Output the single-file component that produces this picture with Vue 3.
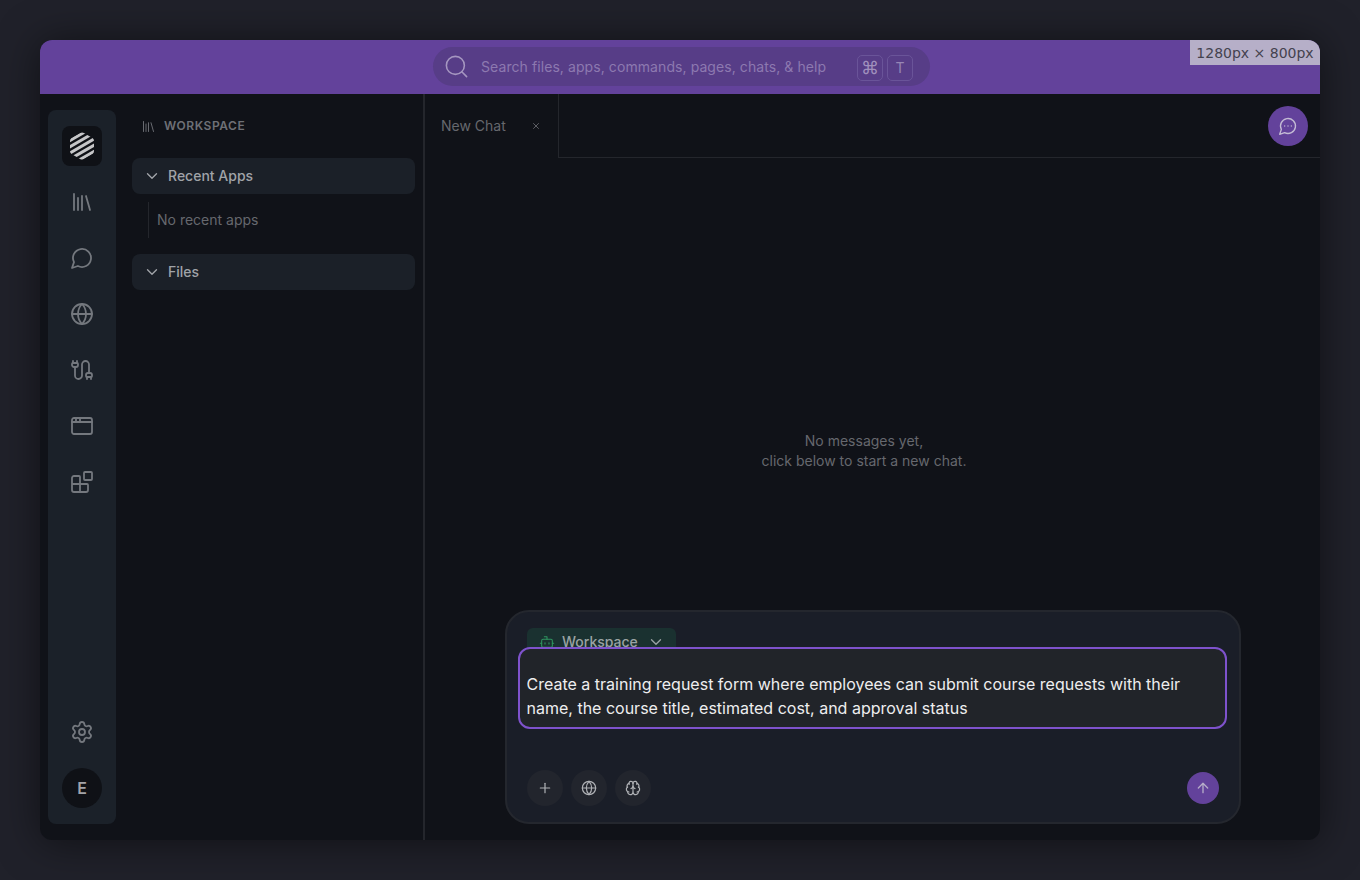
<template>
  <div class="page">
    <div class="frame">
      <header class="topbar">
        <div class="search">
          <svg class="search-icon" viewBox="0 0 24 24"><circle cx="11" cy="11" r="8" /><path d="m21 21-4.3-4.3" /></svg>
          <span class="search-text">Search files, apps, commands, pages, chats, &amp; help</span>
          <span class="key cmd">⌘</span>
          <span class="key">T</span>
        </div>
        <div class="size-tag">1280px × 800px</div>
      </header>
      <div class="body">
        <nav class="rail">
          <div class="logo">
            <svg viewBox="0 0 24 28" class="logo-svg">
              <defs>
                <clipPath id="hex"><path d="M10 1Q12 0 14 1L22.5 6Q24 7 24 9V19Q24 21 22.5 22L14 27Q12 28 10 27L1.5 22Q0 21 0 19V9Q0 7 1.5 6Z" /></clipPath>
              </defs>
              <g clip-path="url(#hex)" class="stripes">
                <path v-for="c in stripes" :key="c" :d="`M-2 ${c + 1.15}L26 ${c - 15}`" />
              </g>
            </svg>
          </div>
          <button v-for="n in navIcons" :key="n.id" class="rail-btn">
            <svg viewBox="0 0 24 24" class="ic"><path v-for="d in n.paths" :key="d" :d="d" /></svg>
          </button>
          <div class="spacer"></div>
          <button class="rail-btn">
            <svg viewBox="0 0 24 24" class="ic"><path d="M9.671 4.136a2.34 2.34 0 0 1 4.659 0 2.34 2.34 0 0 0 3.319 1.915 2.34 2.34 0 0 1 2.33 4.033 2.34 2.34 0 0 0 0 3.831 2.34 2.34 0 0 1-2.33 4.033 2.34 2.34 0 0 0-3.319 1.915 2.34 2.34 0 0 1-4.659 0 2.34 2.34 0 0 0-3.32-1.915 2.34 2.34 0 0 1-2.33-4.033 2.34 2.34 0 0 0 0-3.831A2.34 2.34 0 0 1 6.35 6.051a2.34 2.34 0 0 0 3.319-1.915" /><circle cx="12" cy="12" r="3" /></svg>
          </button>
          <div class="avatar">E</div>
        </nav>
        <aside class="side">
          <div class="side-head">
            <svg viewBox="0 0 24 24" class="side-ic"><path d="m16 6 4 14" /><path d="M12 6v14" /><path d="M8 8v12" /><path d="M4 4v16" /></svg>
            <span>WORKSPACE</span>
          </div>
          <div class="sec">
            <svg viewBox="0 0 24 24" class="chev"><path d="m6 9 6 6 6-6" /></svg>
            <span>Recent Apps</span>
          </div>
          <div class="empty"><span>No recent apps</span></div>
          <div class="sec">
            <svg viewBox="0 0 24 24" class="chev"><path d="m6 9 6 6 6-6" /></svg>
            <span>Files</span>
          </div>
        </aside>
        <main class="main">
          <div class="tabs">
            <div class="tab">
              <span>New Chat</span>
              <svg viewBox="0 0 24 24" class="close"><path d="M18 6 6 18" /><path d="m6 6 12 12" /></svg>
            </div>
            <div class="tab-rest">
              <button class="chat-btn">
                <svg viewBox="0 0 24 24"><path d="M7.9 20A9 9 0 1 0 4 16.1L2 22Z" /><path d="M8 12h.01" /><path d="M12 12h.01" /><path d="M16 12h.01" /></svg>
              </button>
            </div>
          </div>
          <div class="content">
            <div class="placeholder">No messages yet,<br />click below to start a new chat.</div>
            <div class="composer">
              <div class="chip">
                <svg viewBox="0 0 24 24" class="bot"><path d="M12 8V4H8" /><rect width="16" height="12" x="4" y="8" rx="2" /><path d="M2 14h2" /><path d="M20 14h2" /><path d="M15 13v2" /><path d="M9 13v2" /></svg>
                <span>Workspace</span>
                <svg viewBox="0 0 24 24" class="chip-chev"><path d="m6 9 6 6 6-6" /></svg>
              </div>
              <div class="input">Create a training request form where employees can submit course requests with their name, the course title, estimated cost, and approval status</div>
              <div class="tools">
                <button class="tool"><svg viewBox="0 0 24 24"><path d="M5 12h14" /><path d="M12 5v14" /></svg></button>
                <button class="tool"><svg viewBox="0 0 24 24"><circle cx="12" cy="12" r="10" /><path d="M12 2a14.5 14.5 0 0 0 0 20 14.5 14.5 0 0 0 0-20" /><path d="M2 12h20" /></svg></button>
                <button class="tool"><svg viewBox="0 0 24 24"><path d="M12 18V5" /><path d="M15 13a4.17 4.17 0 0 1-3-4 4.17 4.17 0 0 1-3 4" /><path d="M17.598 6.5A3 3 0 1 0 12 5a3 3 0 1 0-5.598 1.5" /><path d="M17.997 5.125a4 4 0 0 1 2.526 5.77" /><path d="M18 18a4 4 0 0 0 2-7.464" /><path d="M19.967 17.483A4 4 0 1 1 12 18a4 4 0 1 1-7.967-.517" /><path d="M6 18a4 4 0 0 1-2-7.464" /><path d="M6.003 5.125a4 4 0 0 0-2.526 5.77" /></svg></button>
                <button class="send"><svg viewBox="0 0 24 24"><path d="m5 12 7-7 7 7" /><path d="M12 19V5" /></svg></button>
              </div>
            </div>
          </div>
        </main>
      </div>
    </div>
  </div>
</template>

<script setup>
const stripes = [2.3, 8.5, 14.7, 20.9, 27.1, 33.3, 39.5]
const navIcons = [
  { id: 'library', paths: ['m16 6 4 14', 'M12 6v14', 'M8 8v12', 'M4 4v16'] },
  { id: 'chat', paths: ['M7.9 20A9 9 0 1 0 4 16.1L2 22Z'] },
  { id: 'globe', paths: ['M12 2a10 10 0 1 0 0 20 10 10 0 0 0 0-20Z', 'M12 2a14.5 14.5 0 0 0 0 20 14.5 14.5 0 0 0 0-20', 'M2 12h20'] },
  { id: 'cable', paths: ['M17 21v-2a1 1 0 0 1-1-1v-1a2 2 0 0 1 2-2h2a2 2 0 0 1 2 2v1a1 1 0 0 1-1 1', 'M19 15V6.5a1 1 0 0 0-7 0v11a1 1 0 0 1-7 0V9', 'M21 21v-2h-4', 'M3 5h4V3', 'M7 5a1 1 0 0 1 1 1v1a2 2 0 0 1-2 2H4a2 2 0 0 1-2-2V6a1 1 0 0 1 1-1V3'] },
  { id: 'window', paths: ['M4 4h16a2 2 0 0 1 2 2v12a2 2 0 0 1-2 2H4a2 2 0 0 1-2-2V6a2 2 0 0 1 2-2Z', 'M10 4v4', 'M2 8h20', 'M6 4v4'] },
  { id: 'blocks', paths: ['M10 22V7a1 1 0 0 0-1-1H4a2 2 0 0 0-2 2v12a2 2 0 0 0 2 2h12a2 2 0 0 0 2-2v-5a1 1 0 0 0-1-1H2', 'M15 2h6a1 1 0 0 1 1 1v6a1 1 0 0 1-1 1h-6a1 1 0 0 1-1-1V3a1 1 0 0 1 1-1Z'] },
]
</script>

<style>
html, body { margin: 0; background: #20212a; }
</style>

<style scoped>
* { box-sizing: border-box; }
svg { fill: none; stroke: currentColor; stroke-width: 2; stroke-linecap: round; stroke-linejoin: round; display: block; }
button { border: 0; padding: 0; background: none; }
.page {
  width: 1360px; height: 880px; padding: 40px; background: #20212a;
  font-family: Inter, "Liberation Sans", sans-serif; overflow: hidden;
}
.frame {
  width: 1280px; height: 800px; display: flex; flex-direction: column; background: #101218;
  border-radius: 12px; overflow: hidden; box-shadow: 0 2px 40px rgba(0, 0, 0, .5);
}
.topbar {
  height: 54px; flex: none; background: #63429b; display: flex; align-items: center; justify-content: center;
  position: relative; padding-left: 3px; padding-bottom: 1px;
}
.search {
  width: 497px; height: 39px; border-radius: 20px; background: #573d87; display: flex; align-items: center;
  padding: 0 17px 0 10px; color: #8d79b0; font-size: 14px;
}
.search-icon { width: 27px; height: 27px; stroke-width: 1.4; flex: none; color: #a596c0; }
.search-text { margin-left: 11px; flex: 1; white-space: nowrap; letter-spacing: .08px; padding-bottom: 1px; }
.key {
  width: 26px; height: 26px; border: 1px solid #6a5499; border-radius: 5px; display: flex; align-items: center;
  justify-content: center; font-size: 14px; color: #9686b5; margin-left: 4px; position: relative; top: 1px;
}
.cmd { font-size: 18px; color: #a090bd; }
.size-tag {
  position: absolute; right: 0; top: 0; height: 25px; width: 130px; background: #b6afc8; color: #44424f;
  font: 14px/26px "DejaVu Sans", sans-serif; text-align: center; white-space: nowrap;
}
.body { flex: 1; display: flex; min-height: 0; }
.rail {
  width: 68px; margin: 16px 0 16px 8px; background: #1b2129; border-radius: 8px; display: flex; flex-direction: column;
  align-items: center; padding-top: 16px; padding-bottom: 16px; flex: none;
}
.logo {
  width: 40px; height: 40px; border-radius: 8px; background: #0f1116; display: flex; align-items: center; justify-content: center;
  margin-bottom: 16px;
}
.logo-svg { width: 24px; height: 28px; }
.stripes { stroke: #c6c6c8; stroke-width: 3; stroke-linecap: butt; }
.rail-btn { width: 40px; height: 40px; margin-bottom: 16px; display: flex; align-items: center; justify-content: center; color: #74787e; }
.ic { width: 24px; height: 24px; stroke-width: 1.8; }
.spacer { flex: 1; }
.avatar {
  width: 40px; height: 40px; border-radius: 50%; background: #0f1116; color: #a3a3a8; font-size: 16px; font-weight: 600;
  display: flex; align-items: center; justify-content: center;
}
.side { width: 309px; flex: none; padding: 16px 8px 0 16px; border-right: 2px solid #24262c; }
.side-head { height: 32px; display: flex; align-items: center; gap: 8px; padding-left: 9px; padding-bottom: 2px; color: #6e7076; font-size: 12px; font-weight: 600; letter-spacing: .55px; margin-bottom: 16px; }
.side-ic { width: 15px; height: 15px; stroke-width: 1.5; flex: none; position: relative; top: 1px; }
.sec { height: 36px; width: 283px; border-radius: 8px; background: #1b2028; display: flex; align-items: center; padding-left: 11px; gap: 7px; color: #a0a3a8; font-size: 14px; font-weight: 500; }
.sec span { position: relative; top: -1px; }
.chev { width: 18px; height: 18px; flex: none; color: #a0a3a8; stroke-width: 1.8; }
.empty { margin: 8px 0 16px 16px; height: 36px; border-left: 1px solid #24262c; display: flex; align-items: center; padding-left: 8px; padding-bottom: 2px; color: #66686e; font-size: 14px; }
.main { flex: 1; min-width: 0; display: flex; flex-direction: column; }
.tabs { height: 64px; flex: none; display: flex; }
.tab { width: 134px; display: flex; align-items: center; padding-left: 16px; padding-bottom: 2px; color: #66686e; font-size: 14px; border-right: 1px solid #24262c; position: relative; }
.close { width: 10px; height: 10px; color: #77797e; position: absolute; right: 17px; top: 27px; stroke-width: 1.8; }
.tab-rest { flex: 1; border-bottom: 1px solid #24262c; display: flex; justify-content: flex-end; align-items: flex-start; padding: 12px 12px 0 0; }
.chat-btn { width: 40px; height: 40px; border-radius: 50%; background: #63429b; color: #c3bad4; display: flex; align-items: center; justify-content: center; }
.chat-btn svg { width: 20px; height: 20px; stroke-width: 1.6; }
.content { flex: 1; display: flex; flex-direction: column; min-height: 0; padding: 0 79px 16px 80px; }
.placeholder { flex: 1; text-align: center; color: #66686e; font-size: 14px; line-height: 20px; margin-right: 18px; padding-top: 273px; }
.composer {
  height: 214px; flex: none; border-radius: 24px; background: #1a1e28; border: 2px solid #24272e; position: relative;
  padding: 16px 20px; display: flex; flex-direction: column;
}
.chip {
  width: 149px; height: 29px; border-radius: 6px; background: #1a3130; display: flex; align-items: flex-start; padding: 5px 0 0 12px; color: #9aa3a3; font-size: 14px; font-weight: 500; flex: none;
}
.bot { width: 16px; height: 16px; color: #2f9560; stroke-width: 1.6; margin: 1px 7px 0 0; flex: none; }
.chip-chev { width: 18px; height: 18px; margin: 0 0 0 9px; stroke-width: 1.8; }
.input {
  position: absolute; left: 11px; right: 12px; top: 35px; height: 82px; border: 2px solid #7e52cc; border-radius: 12px; background: #212429;
  color: #eeeeef; font-size: 16px; line-height: 24px; padding: 23px 6.5px 0;
}
.tools { margin-top: auto; display: flex; gap: 8px; align-items: center; }
.tool { width: 36px; height: 36px; border-radius: 50%; background: #22252d; color: #b0b2b6; display: flex; align-items: center; justify-content: center; }
.tool svg { width: 16px; height: 16px; stroke-width: 1.8; }
.send { margin-left: auto; width: 32px; height: 32px; border-radius: 50%; background: #63429b; color: #b5abc8; display: flex; align-items: center; justify-content: center; }
.send svg { width: 16px; height: 16px; }
</style>
